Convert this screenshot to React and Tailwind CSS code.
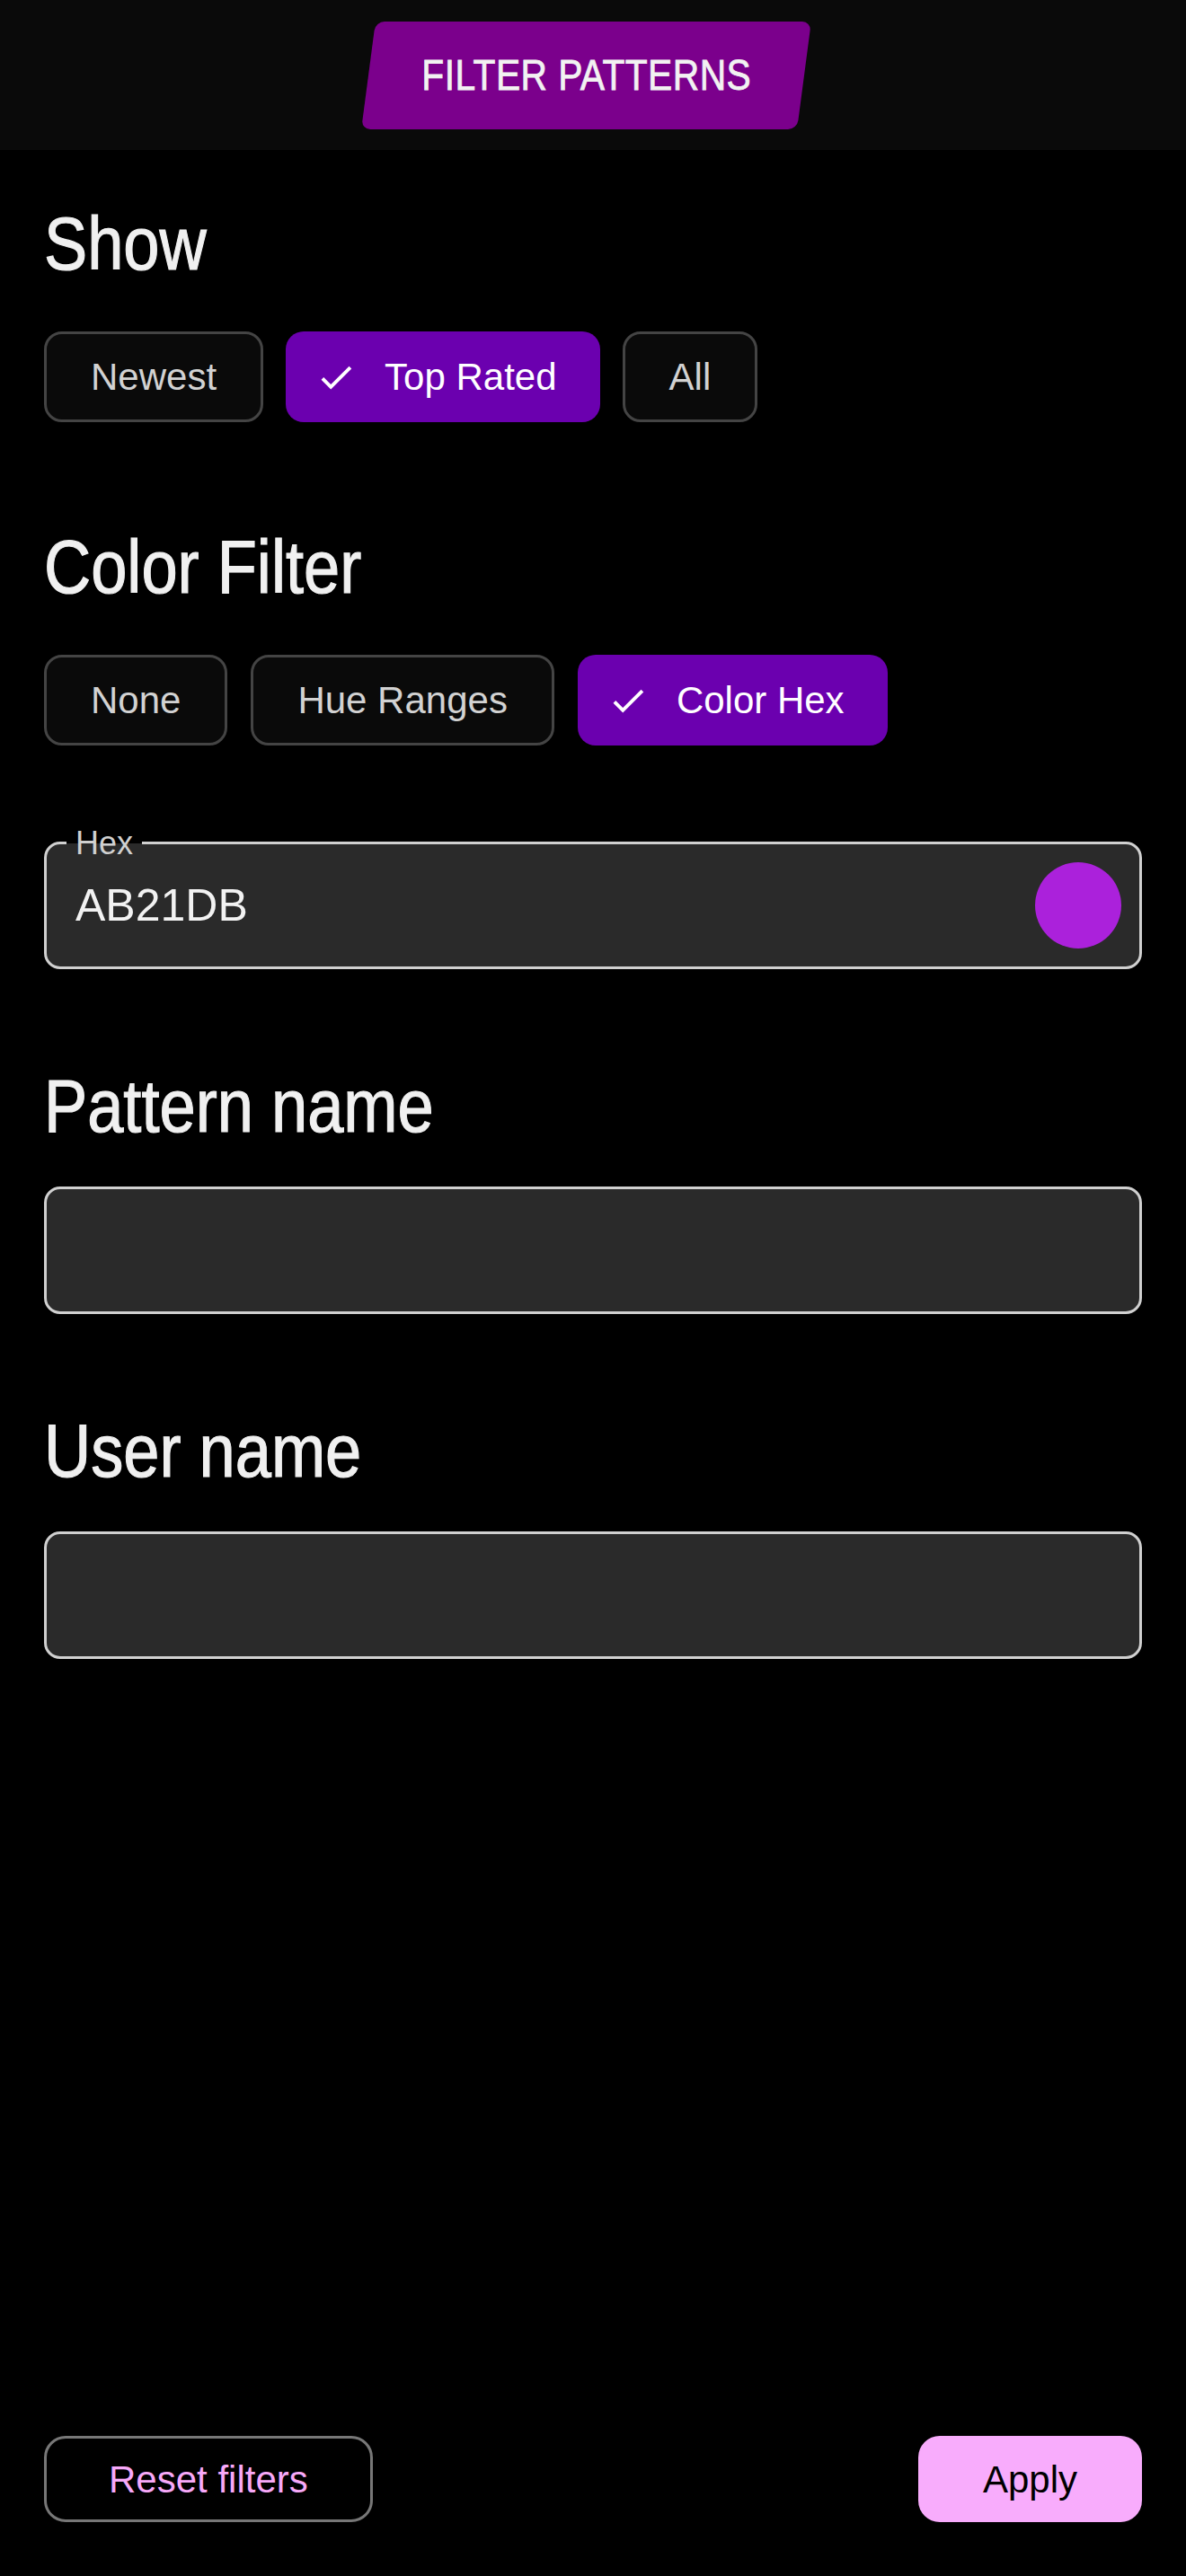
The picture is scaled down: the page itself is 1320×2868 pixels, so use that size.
import React, { useState } from 'react';

const body = "font-['Liberation_Sans',Arial,sans-serif]";

const showOptions = ['Newest', 'Top Rated', 'All'];
const colorOptions = ['None', 'Hue Ranges', 'Color Hex'];

function CheckIcon() {
  return (
    <svg viewBox="0 0 24 24" className="w-[46px] h-[46px] shrink-0" fill="currentColor">
      <path d="M9 16.17 4.83 12l-1.42 1.41L9 19 21 7l-1.41-1.41z" />
    </svg>
  );
}

function Chip({ label, selected, onClick }) {
  if (selected) {
    return (
      <button
        onClick={onClick}
        className="h-[101px] flex items-center pl-[33px] pr-[48px] rounded-[20px] bg-[#6b00af] text-white text-[42px]"
      >
        <CheckIcon />
        <span className="ml-[31px]">{label}</span>
      </button>
    );
  }
  return (
    <button
      onClick={onClick}
      className="h-[101px] flex items-center px-[49px] rounded-[20px] border-[3px] border-[#444444] bg-[#0a0a0a] text-[#d2d2d2] text-[42px]"
    >
      {label}
    </button>
  );
}

// narrow heading face: no condensed family installed, so squeeze Liberation Sans
function Heading({ children, className = '' }) {
  return (
    <h2 className={`text-[84px] leading-[84px] text-[#f0f0f0] [-webkit-text-stroke:1.2px_#f0f0f0] ${className}`}>
      <span className="inline-block origin-left scale-x-[0.86] whitespace-nowrap">{children}</span>
    </h2>
  );
}

export default function App() {
  const [show, setShow] = useState('Top Rated');
  const [colorMode, setColorMode] = useState('Color Hex');
  const [hex, setHex] = useState('AB21DB');

  return (
    <div className={`min-h-screen bg-black flex flex-col ${body}`}>
      {/* top bar */}
      <div className="h-[167px] bg-[#0a0a0a] flex justify-center pt-[24px]">
        <div className="ml-[-16px] w-[485px] h-[120px] -skew-x-[7.5deg] rounded-[10px] bg-[#7b008c] flex items-center justify-center">
          <span className="skew-x-[7.5deg]">
            <span className="inline-block scale-x-[0.85] text-[48px] tracking-[0.5px] text-[#f2f2f2] [-webkit-text-stroke:0.8px_#f2f2f2] whitespace-nowrap">
              FILTER PATTERNS
            </span>
          </span>
        </div>
      </div>

      <div className="px-[49px] flex flex-col">
        <Heading className="mt-[62px]">Show</Heading>
        <div className="mt-[56px] flex gap-[25px]">
          {showOptions.map(o => (
            <Chip key={o} label={o} selected={show === o} onClick={() => setShow(o)} />
          ))}
        </div>

        <Heading className="mt-[119px]">Color Filter</Heading>
        <div className="mt-[56px] flex gap-[26px]">
          {colorOptions.map(o => (
            <Chip key={o} label={o} selected={colorMode === o} onClick={() => setColorMode(o)} />
          ))}
        </div>

        {/* hex field */}
        <div className="mt-[107px] relative h-[142px] rounded-[18px] border-[3px] border-[#d0d0d0] bg-[#2a2a2a] flex items-center pl-[32px] pr-[20px]">
          <span className="absolute left-[22px] top-[-1.5px] -translate-y-1/2 px-[10px] text-[36px] leading-[36px] text-[#d0d0d0] bg-[linear-gradient(to_bottom,#000_50%,#2a2a2a_50%)]">
            Hex
          </span>
          <input
            value={hex}
            onChange={e => setHex(e.target.value)}
            className="flex-1 bg-transparent outline-none text-[50px] text-[#f2f2f2]"
          />
          <div className="w-[96px] h-[96px] rounded-full bg-[#ab21db] shrink-0" />
        </div>

        <Heading className="mt-[110px]">Pattern name</Heading>
        <input className="mt-[48px] h-[142px] rounded-[18px] border-[3px] border-[#d0d0d0] bg-[#2a2a2a] outline-none px-[32px] text-[50px] text-[#f2f2f2]" />

        <Heading className="mt-[110px]">User name</Heading>
        <input className="mt-[48px] h-[142px] rounded-[18px] border-[3px] border-[#d0d0d0] bg-[#2a2a2a] outline-none px-[32px] text-[50px] text-[#f2f2f2]" />
      </div>

      <div className="flex-1" />

      {/* footer actions */}
      <div className="px-[49px] pb-[60px] flex justify-between items-center">
        <button className="h-[96px] px-[69px] rounded-[24px] border-[3px] border-[#777777] text-[42px] text-[#f7a8f8]">
          Reset filters
        </button>
        <button className="h-[96px] px-[72px] rounded-[24px] bg-[#f8acfc] text-[42px] text-black">
          Apply
        </button>
      </div>
    </div>
  );
}
